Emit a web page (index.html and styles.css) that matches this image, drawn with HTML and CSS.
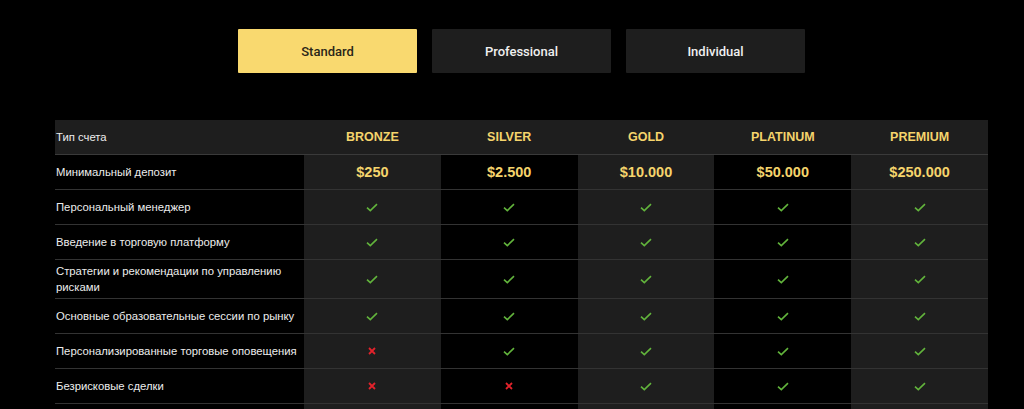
FILE: index.html
```html
<!DOCTYPE html>
<html lang="ru">
<head>
<meta charset="utf-8">
<title>Accounts</title>
<link rel="stylesheet" href="styles.css">
</head>
<body>
<div class="page">
  <div class="tabs">
    <div class="tab active">Standard</div>
    <div class="tab">Professional</div>
    <div class="tab">Individual</div>
  </div>

  <div class="table">
    <div class="row head">
      <div class="cell label">Тип счета</div>
      <div class="cell title">BRONZE</div>
      <div class="cell title">SILVER</div>
      <div class="cell title">GOLD</div>
      <div class="cell title">PLATINUM</div>
      <div class="cell title">PREMIUM</div>
    </div>
    <div class="row">
      <div class="cell label">Минимальный депозит</div>
      <div class="cell val alt">$250</div>
      <div class="cell val">$2.500</div>
      <div class="cell val alt">$10.000</div>
      <div class="cell val">$50.000</div>
      <div class="cell val alt">$250.000</div>
    </div>
    <div class="row">
      <div class="cell label">Персональный менеджер</div>
      <div class="cell alt"><svg class="ok" viewBox="0 0 12 9"><path d="M1 4.6 4.3 7.6 11 1.2"/></svg></div>
      <div class="cell"><svg class="ok" viewBox="0 0 12 9"><path d="M1 4.6 4.3 7.6 11 1.2"/></svg></div>
      <div class="cell alt"><svg class="ok" viewBox="0 0 12 9"><path d="M1 4.6 4.3 7.6 11 1.2"/></svg></div>
      <div class="cell"><svg class="ok" viewBox="0 0 12 9"><path d="M1 4.6 4.3 7.6 11 1.2"/></svg></div>
      <div class="cell alt"><svg class="ok" viewBox="0 0 12 9"><path d="M1 4.6 4.3 7.6 11 1.2"/></svg></div>
    </div>
    <div class="row">
      <div class="cell label">Введение в торговую платформу</div>
      <div class="cell alt"><svg class="ok" viewBox="0 0 12 9"><path d="M1 4.6 4.3 7.6 11 1.2"/></svg></div>
      <div class="cell"><svg class="ok" viewBox="0 0 12 9"><path d="M1 4.6 4.3 7.6 11 1.2"/></svg></div>
      <div class="cell alt"><svg class="ok" viewBox="0 0 12 9"><path d="M1 4.6 4.3 7.6 11 1.2"/></svg></div>
      <div class="cell"><svg class="ok" viewBox="0 0 12 9"><path d="M1 4.6 4.3 7.6 11 1.2"/></svg></div>
      <div class="cell alt"><svg class="ok" viewBox="0 0 12 9"><path d="M1 4.6 4.3 7.6 11 1.2"/></svg></div>
    </div>
    <div class="row">
      <div class="cell label">Стратегии и рекомендации по управлению рисками</div>
      <div class="cell alt"><svg class="ok" viewBox="0 0 12 9"><path d="M1 4.6 4.3 7.6 11 1.2"/></svg></div>
      <div class="cell"><svg class="ok" viewBox="0 0 12 9"><path d="M1 4.6 4.3 7.6 11 1.2"/></svg></div>
      <div class="cell alt"><svg class="ok" viewBox="0 0 12 9"><path d="M1 4.6 4.3 7.6 11 1.2"/></svg></div>
      <div class="cell"><svg class="ok" viewBox="0 0 12 9"><path d="M1 4.6 4.3 7.6 11 1.2"/></svg></div>
      <div class="cell alt"><svg class="ok" viewBox="0 0 12 9"><path d="M1 4.6 4.3 7.6 11 1.2"/></svg></div>
    </div>
    <div class="row">
      <div class="cell label">Основные образовательные сессии по рынку</div>
      <div class="cell alt"><svg class="ok" viewBox="0 0 12 9"><path d="M1 4.6 4.3 7.6 11 1.2"/></svg></div>
      <div class="cell"><svg class="ok" viewBox="0 0 12 9"><path d="M1 4.6 4.3 7.6 11 1.2"/></svg></div>
      <div class="cell alt"><svg class="ok" viewBox="0 0 12 9"><path d="M1 4.6 4.3 7.6 11 1.2"/></svg></div>
      <div class="cell"><svg class="ok" viewBox="0 0 12 9"><path d="M1 4.6 4.3 7.6 11 1.2"/></svg></div>
      <div class="cell alt"><svg class="ok" viewBox="0 0 12 9"><path d="M1 4.6 4.3 7.6 11 1.2"/></svg></div>
    </div>
    <div class="row">
      <div class="cell label">Персонализированные торговые оповещения</div>
      <div class="cell alt"><svg class="no" viewBox="0 0 8 8"><path d="M1 1 7 7M7 1 1 7"/></svg></div>
      <div class="cell"><svg class="ok" viewBox="0 0 12 9"><path d="M1 4.6 4.3 7.6 11 1.2"/></svg></div>
      <div class="cell alt"><svg class="ok" viewBox="0 0 12 9"><path d="M1 4.6 4.3 7.6 11 1.2"/></svg></div>
      <div class="cell"><svg class="ok" viewBox="0 0 12 9"><path d="M1 4.6 4.3 7.6 11 1.2"/></svg></div>
      <div class="cell alt"><svg class="ok" viewBox="0 0 12 9"><path d="M1 4.6 4.3 7.6 11 1.2"/></svg></div>
    </div>
    <div class="row">
      <div class="cell label">Безрисковые сделки</div>
      <div class="cell alt"><svg class="no" viewBox="0 0 8 8"><path d="M1 1 7 7M7 1 1 7"/></svg></div>
      <div class="cell"><svg class="no" viewBox="0 0 8 8"><path d="M1 1 7 7M7 1 1 7"/></svg></div>
      <div class="cell alt"><svg class="ok" viewBox="0 0 12 9"><path d="M1 4.6 4.3 7.6 11 1.2"/></svg></div>
      <div class="cell"><svg class="ok" viewBox="0 0 12 9"><path d="M1 4.6 4.3 7.6 11 1.2"/></svg></div>
      <div class="cell alt"><svg class="ok" viewBox="0 0 12 9"><path d="M1 4.6 4.3 7.6 11 1.2"/></svg></div>
    </div>
    <div class="row">
      <div class="cell label">&nbsp;</div>
      <div class="cell alt"></div>
      <div class="cell"></div>
      <div class="cell alt"></div>
      <div class="cell"></div>
      <div class="cell alt"></div>
    </div>
  </div>
</div>
</body>
</html>
```
FILE: styles.css
```css
html, body {
  margin: 0;
  padding: 0;
  background: #000;
  height: 100%;
  overflow: hidden;
}
body {
  font-family: "Liberation Sans", Arial, sans-serif;
  color: #f2f2f2;
}
.page {
  padding: 29px 0 0 55px;
  width: 933px;
}
.tabs {
  display: flex;
  justify-content: center;
  gap: 15px;
}
.tab {
  width: 179px;
  height: 44px;
  display: flex;
  align-items: center;
  justify-content: center;
  background: #1e1e1e;
  color: #f0f0f0;
  font-family: Roboto, "Liberation Sans", sans-serif;
  font-weight: 500;
  font-size: 13px;
  border-radius: 1px;
}
.tab.active {
  background: #f9d96f;
  color: #2a2618;
}
.table {
  margin-top: 47px;
}
.row {
  display: grid;
  grid-template-columns: 249px repeat(5, 1fr);
  border-top: 1px solid #333;
}
.row.head {
  border-top: 0;
  background: #1e1e1e;
}
.row.head + .row {
  border-top-color: #3a3a3a;
}
.cell {
  min-height: 34px;
  padding: 1px 0;
  box-sizing: border-box;
  display: flex;
  align-items: center;
  justify-content: center;
}
.cell.label {
  justify-content: flex-start;
  padding: 3px 0 3px 1px;
  font-size: 11.3px;
  line-height: 16px;
  color: #ededed;
}
.cell.alt {
  background: #1e1e1e;
}
.title {
  font-weight: 700;
  font-size: 12.5px;
  color: #f5d46c;
}
.val {
  font-weight: 700;
  font-size: 14.5px;
  color: #f5d46c;
}
.ok {
  width: 12px;
  height: 9px;
  fill: none;
  stroke: #62b43c;
  stroke-width: 1.6;
}
.no {
  width: 8px;
  height: 8px;
  fill: none;
  stroke: #e2222b;
  stroke-width: 1.8;
}
```
